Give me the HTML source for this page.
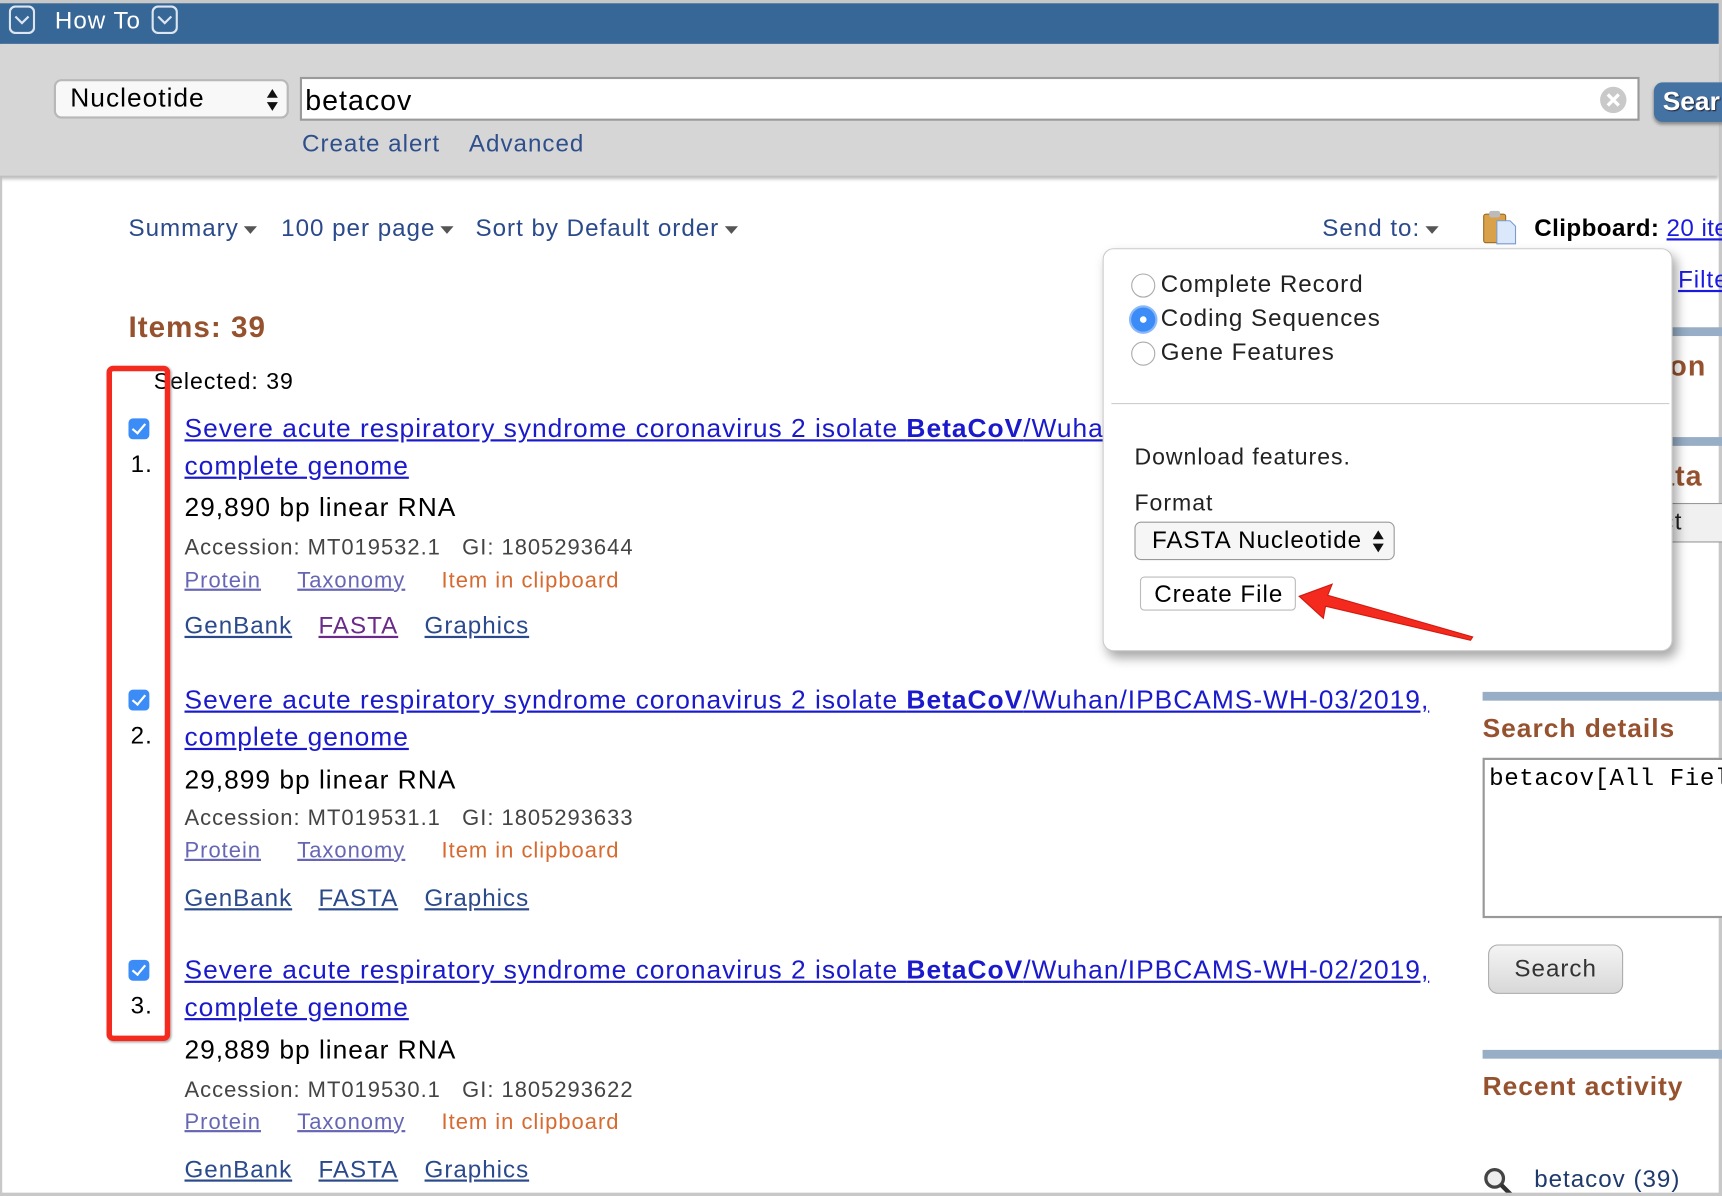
<!DOCTYPE html>
<html><head><meta charset="utf-8"><style>
html,body{margin:0;padding:0;width:1722px;height:1196px;overflow:hidden;background:#fff}
#w{position:absolute;left:0;top:0;width:1568px;height:1089px;transform:scale(1.09821);transform-origin:0 0;font-family:"Liberation Sans",Arial,sans-serif;overflow:hidden;background:#fff;letter-spacing:0.9px}
.t{position:absolute;white-space:nowrap;line-height:1}
.a{position:absolute;left:0;top:0}
.lk{color:#1a1acc;text-decoration:underline}
.nav{color:#2b4a8b;font-size:22px}
.tri{display:inline-block;width:0;height:0;border-left:6px solid transparent;border-right:6px solid transparent;border-top:7px solid #555;vertical-align:middle;margin-left:5px}
.cb{position:absolute;width:19px;height:19px;border-radius:4px;background:#3b8cf6}
.cb:after{content:"";position:absolute;left:6px;top:2px;width:5px;height:10px;border:solid #fff;border-width:0 2px 2px 0;transform:rotate(40deg)}
.bar{position:absolute;height:8px;background:#98aec6}
.br{color:#96522f;font-weight:bold}
.rad{position:absolute;width:22px;height:22px;border-radius:50%;border:1px solid #aaa;background:#fff;box-sizing:border-box}
</style></head><body><div id="w">
<div class="a" style="width:1568px;height:1089px;box-sizing:border-box;border:2px solid #c8c8c8;border-top:none;border-right:3px solid #c8c8c8"></div>
<div class="a" style="width:1565px;height:40px;background:#376797;top:0"></div>
<div class="a" style="top:0;height:3px;width:1568px;background:#c8c8c8"></div>
<svg class="a" style="left:8px;top:5px" width="24" height="26"><rect x="1" y="1" width="22" height="24" rx="5" fill="none" stroke="#dde6f0" stroke-width="2"/><path d="M6 10 L12 16 L18 10" fill="none" stroke="#dde6f0" stroke-width="2"/></svg>
<div class="t" style="left:50px;top:8px;color:#fff;font-size:22px">How To</div>
<svg class="a" style="left:138px;top:5px" width="24" height="26"><rect x="1" y="1" width="22" height="24" rx="5" fill="none" stroke="#dde6f0" stroke-width="2"/><path d="M6 10 L12 16 L18 10" fill="none" stroke="#dde6f0" stroke-width="2"/></svg>
<div class="a" style="top:40px;height:120px;width:1565px;background:#d6d6d6;box-shadow:0 3px 3px #bbb"></div>
<div class="a" style="left:49px;top:72px;width:214px;height:36px;box-sizing:border-box;border:2px solid #b8b8b8;border-radius:7px;background:#f8f8f8"></div>
<div class="t" style="left:64px;top:78px;font-size:24px;color:#000">Nucleotide</div>
<svg class="a" style="left:242px;top:79px" width="12" height="24"><path d="M1 10 L6 2 L11 10Z M1 14 L6 22 L11 14Z" fill="#111"/></svg>
<div class="a" style="left:273px;top:70px;width:1220px;height:40px;box-sizing:border-box;border:2px solid #9a9a9a;background:#fff"></div>
<div class="t" style="left:278px;top:78px;font-size:26px;color:#000">betacov</div>
<svg class="a" style="left:1456px;top:78px" width="26" height="26"><circle cx="13" cy="13" r="12" fill="#c9c9c9"/><path d="M8 8 L18 18 M18 8 L8 18" stroke="#fff" stroke-width="3"/></svg>
<div class="a" style="left:1506px;top:75px;width:70px;height:36px;background:#4473a3;border-radius:8px;box-shadow:0 2px 3px #888"></div>
<div class="t" style="left:1514px;top:81px;font-size:24px;color:#fff;font-weight:bold;text-shadow:1px 1px 1px #223;letter-spacing:0">Sear</div>
<div class="t" style="left:275px;top:120px;font-size:22px;color:#2f4f8c">Create alert</div>
<div class="t" style="left:427px;top:120px;font-size:22px;color:#2f4f8c">Advanced</div>

<div class="t nav" style="left:117px;top:197px">Summary<span class="tri"></span></div>
<div class="t nav" style="left:256px;top:197px">100 per page<span class="tri"></span></div>
<div class="t nav" style="left:433px;top:197px">Sort by Default order<span class="tri"></span></div>
<div class="t nav" style="left:1204px;top:197px">Send to:<span class="tri"></span></div>
<svg class="a" style="left:1349px;top:191px" width="34" height="32"><rect x="2" y="4" width="20" height="26" rx="2" fill="#d9a24a" stroke="#9a6a20"/><rect x="7" y="1" width="10" height="6" rx="2" fill="#bbb"/><path d="M14 10 H26 L31 15 V31 H14Z" fill="#dbe8fb" stroke="#7a9ccc"/></svg>
<div class="t" style="left:1397px;top:197px;font-size:22px;font-weight:bold;color:#000;letter-spacing:0.4px">Clipboard: <span class="lk" style="font-weight:normal;color:#1a1ae0">20 items</span></div>
<div class="t lk" style="left:1528px;top:244px;font-size:22px;color:#1a1ae0">Filters</div>
<div class="bar" style="left:1520px;top:298px;width:50px"></div>
<div class="t br" style="left:1512px;top:320px;font-size:26px">ion</div>
<div class="bar" style="left:1520px;top:398px;width:50px"></div>
<div class="t br" style="left:1510px;top:420px;font-size:26px">ata</div>
<div class="a" style="left:1515px;top:458px;width:60px;height:34px;border:1px solid #999;background:#f0f0f0"></div>
<div class="t" style="left:1500px;top:464px;font-size:22px;color:#222">ect</div>

<div class="t br" style="left:117px;top:285px;font-size:27px">Items: 39</div>
<div class="t" style="left:140px;top:337px;font-size:21px;color:#000">Selected: 39</div>

<div class="a" style="top:0">
<div class="cb" style="left:117px;top:381px"></div>
<div class="t" style="left:119px;top:412px;font-size:22px">1.</div>
<div class="t lk" style="left:168px;top:379px;font-size:24px">Severe acute respiratory syndrome coronavirus 2 isolate <b>BetaCoV</b>/Wuhan/IPBCAMS-WH-04/2019,</div>
<div class="t lk" style="left:168px;top:413px;font-size:24px">complete genome</div>
<div class="t" style="left:168px;top:451px;font-size:24px;color:#000">29,890 bp linear RNA</div>
<div class="t" style="left:168px;top:489px;font-size:20px;color:#444">Accession: MT019532.1&nbsp;&nbsp; GI: 1805293644</div>
<div class="t" style="left:168px;top:519px;font-size:20px"><span style="color:#6666b4;text-decoration:underline">Protein</span><span style="margin-left:33px;color:#6666b4;text-decoration:underline">Taxonomy</span><span style="margin-left:33px;color:#d66a30">Item in clipboard</span></div>
<div class="t" style="left:168px;top:559px;font-size:22px"><span style="color:#2b4a8b;text-decoration:underline">GenBank</span><span style="margin-left:24px;color:#6a2a8a;text-decoration:underline">FASTA</span><span style="margin-left:24px;color:#2b4a8b;text-decoration:underline">Graphics</span></div>
</div>
<div class="a" style="top:247px">
<div class="cb" style="left:117px;top:381px"></div>
<div class="t" style="left:119px;top:412px;font-size:22px">2.</div>
<div class="t lk" style="left:168px;top:379px;font-size:24px">Severe acute respiratory syndrome coronavirus 2 isolate <b>BetaCoV</b>/Wuhan/IPBCAMS-WH-03/2019,</div>
<div class="t lk" style="left:168px;top:413px;font-size:24px">complete genome</div>
<div class="t" style="left:168px;top:452px;font-size:24px;color:#000">29,899 bp linear RNA</div>
<div class="t" style="left:168px;top:488px;font-size:20px;color:#444">Accession: MT019531.1&nbsp;&nbsp; GI: 1805293633</div>
<div class="t" style="left:168px;top:518px;font-size:20px"><span style="color:#6666b4;text-decoration:underline">Protein</span><span style="margin-left:33px;color:#6666b4;text-decoration:underline">Taxonomy</span><span style="margin-left:33px;color:#d66a30">Item in clipboard</span></div>
<div class="t" style="left:168px;top:560px;font-size:22px"><span style="color:#2b4a8b;text-decoration:underline">GenBank</span><span style="margin-left:24px;color:#2b4a8b;text-decoration:underline">FASTA</span><span style="margin-left:24px;color:#2b4a8b;text-decoration:underline">Graphics</span></div>
</div>
<div class="a" style="top:493px">
<div class="cb" style="left:117px;top:381px"></div>
<div class="t" style="left:119px;top:412px;font-size:22px">3.</div>
<div class="t lk" style="left:168px;top:379px;font-size:24px">Severe acute respiratory syndrome coronavirus 2 isolate <b>BetaCoV</b>/Wuhan/IPBCAMS-WH-02/2019,</div>
<div class="t lk" style="left:168px;top:413px;font-size:24px">complete genome</div>
<div class="t" style="left:168px;top:452px;font-size:24px;color:#000">29,889 bp linear RNA</div>
<div class="t" style="left:168px;top:490px;font-size:20px;color:#444">Accession: MT019530.1&nbsp;&nbsp; GI: 1805293622</div>
<div class="t" style="left:168px;top:519px;font-size:20px"><span style="color:#6666b4;text-decoration:underline">Protein</span><span style="margin-left:33px;color:#6666b4;text-decoration:underline">Taxonomy</span><span style="margin-left:33px;color:#d66a30">Item in clipboard</span></div>
<div class="t" style="left:168px;top:561px;font-size:22px"><span style="color:#2b4a8b;text-decoration:underline">GenBank</span><span style="margin-left:24px;color:#2b4a8b;text-decoration:underline">FASTA</span><span style="margin-left:24px;color:#2b4a8b;text-decoration:underline">Graphics</span></div>
</div>
<div class="a" style="left:97px;top:333px;width:58px;height:615px;box-sizing:border-box;border:5px solid #f42a1e;border-radius:6px;box-shadow:1px 1px 2px #aaa"></div>

<div class="bar" style="left:1350px;top:630px;width:220px"></div>
<div class="t br" style="left:1350px;top:652px;font-size:24px">Search details</div>
<div class="a" style="left:1350px;top:690px;width:230px;height:146px;box-sizing:border-box;border:2px solid #999;background:#fff"></div>
<div class="t" style="left:1356px;top:699px;font-size:22px;font-family:'Liberation Mono',monospace;color:#000;letter-spacing:0.5px">betacov[All Fields]</div>
<div class="a" style="left:1355px;top:860px;width:123px;height:45px;box-sizing:border-box;border:1px solid #aaa;border-radius:9px;background:linear-gradient(#f4f4f4,#d8d8d8)"></div>
<div class="t" style="left:1379px;top:871px;font-size:22px;color:#333">Search</div>
<div class="bar" style="left:1350px;top:956px;width:220px"></div>
<div class="t br" style="left:1350px;top:978px;font-size:24px">Recent activity</div>
<svg class="a" style="left:1350px;top:1062px" width="30" height="27"><circle cx="11" cy="11" r="8" fill="#eee" stroke="#444" stroke-width="3"/><path d="M17 17 L26 26" stroke="#333" stroke-width="4"/></svg>
<div class="t" style="left:1397px;top:1063px;font-size:22px;color:#1f3b6e">betacov (39)</div>
<div class="a" style="left:0;top:1086px;width:1568px;height:3px;background:#c8c8c8"></div>

<div class="a" style="left:1004px;top:226px;width:519px;height:367px;box-sizing:border-box;border:1px solid #ccc;border-radius:10px;background:#fff;box-shadow:4px 6px 10px rgba(0,0,0,.35)"></div>
<div class="rad" style="left:1030px;top:249px"></div>
<div class="t" style="left:1057px;top:248px;font-size:22px;color:#222">Complete Record</div>
<div class="rad" style="left:1030px;top:280px;background:#3b8cf6;border:none;box-shadow:0 0 0 2px #8bb8f8"></div>
<div class="a" style="left:1038px;top:288px;width:6px;height:6px;border-radius:50%;background:#fff"></div>
<div class="t" style="left:1057px;top:279px;font-size:22px;color:#222">Coding Sequences</div>
<div class="rad" style="left:1030px;top:311px"></div>
<div class="t" style="left:1057px;top:310px;font-size:22px;color:#222">Gene Features</div>
<div class="a" style="left:1012px;top:367px;width:508px;height:1px;background:#ccc"></div>
<div class="t" style="left:1033px;top:406px;font-size:21px;color:#222">Download features.</div>
<div class="t" style="left:1033px;top:448px;font-size:21px;color:#222">Format</div>
<div class="a" style="left:1033px;top:475px;width:237px;height:35px;box-sizing:border-box;border:1px solid #999;border-radius:6px;background:#f6f6f6"></div>
<div class="t" style="left:1049px;top:481px;font-size:22px;color:#000">FASTA Nucleotide</div>
<svg class="a" style="left:1249px;top:481px" width="12" height="24"><path d="M1 10 L6 2 L11 10Z M1 14 L6 22 L11 14Z" fill="#111"/></svg>
<div class="a" style="left:1038px;top:525px;width:142px;height:31px;box-sizing:border-box;border:1px solid #bbb;border-radius:4px;background:#fff"></div>
<div class="t" style="left:1051px;top:530px;font-size:22px;color:#000">Create File</div>
<svg class="a" style="left:1175px;top:525px" width="175" height="65"><path d="M8 18 L38 7 L34 17 L166 55 L164 58 L32 27 L30 38 Z" fill="#f42a1e" stroke="#d01a10" stroke-width="1"/></svg>
</div></body></html>
